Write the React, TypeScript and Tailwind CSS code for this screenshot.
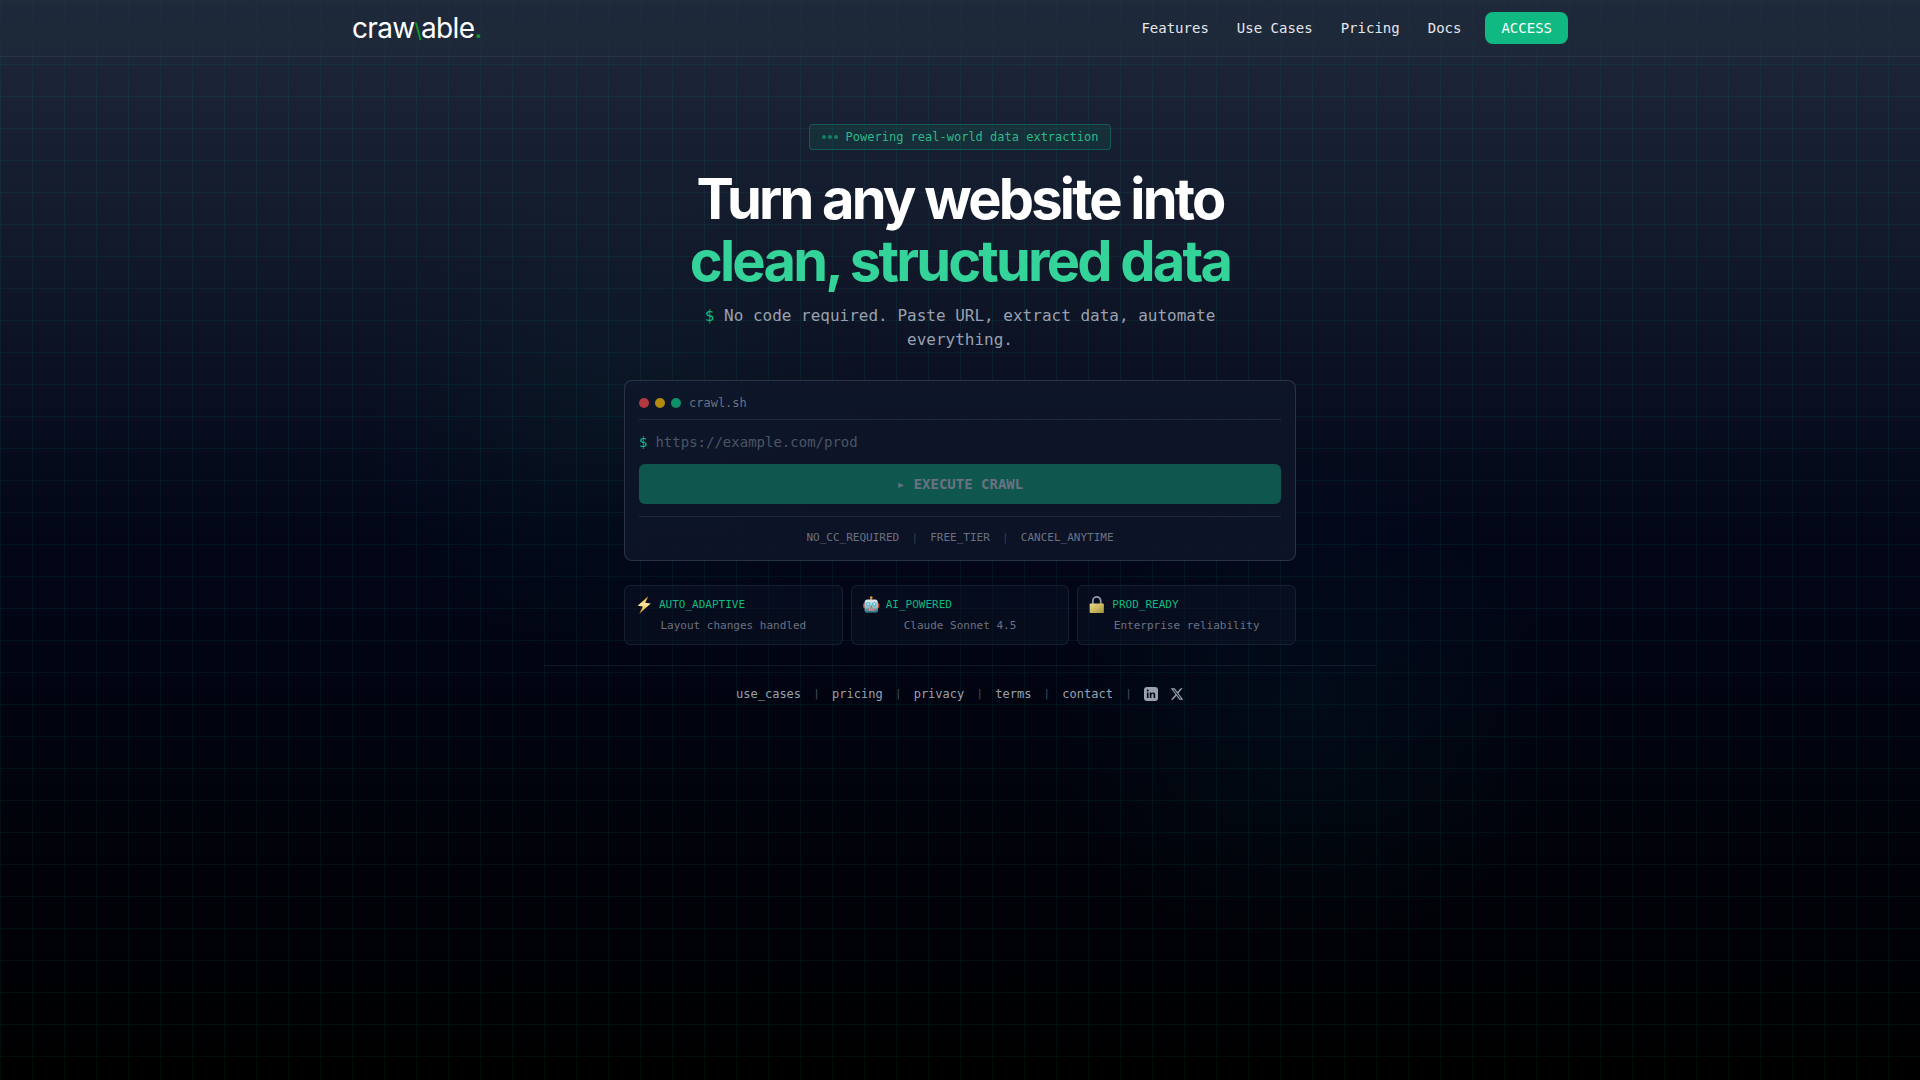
const navLinks = ["Features", "Use Cases", "Pricing", "Docs"];
const perks = ["NO_CC_REQUIRED", "FREE_TIER", "CANCEL_ANYTIME"];
const footerLinks = ["use_cases", "pricing", "privacy", "terms", "contact"];

function Bolt() {
  return (
    <svg viewBox="0 0 16 16" className="size-[18px] shrink-0" aria-hidden="true">
      <defs>
        <linearGradient id="bolt" x1="0" y1="0" x2="0" y2="1">
          <stop offset="0" stopColor="#f59e1b" />
          <stop offset="0.45" stopColor="#ffe9a0" />
          <stop offset="1" stopColor="#f08a12" />
        </linearGradient>
      </defs>
      <path d="M11.8.2 2.300 8.600l4.700.8-3.200 6.400L14 6.600l-4.900-.7z" fill="url(#bolt)" />
    </svg>
  );
}

function Robot() {
  return (
    <svg viewBox="0 0 16 16" className="size-[18px] shrink-0" aria-hidden="true">
      <defs>
        <linearGradient id="robot" x1="0" y1="0" x2="0" y2="1">
          <stop offset="0" stopColor="#e3e8ea" />
          <stop offset="0.55" stopColor="#9cc3ca" />
          <stop offset="1" stopColor="#146f80" />
        </linearGradient>
      </defs>
      <path d="M7.500 1.500h1.400V4H7.500z" fill="#b9822e" />
      <circle cx="8.200" cy="1.400" r="1.200" fill="#e8963a" />
      <rect x="1" y="6.400" width="2" height="4.200" rx="0.900" fill="#c4493f" />
      <rect x="13.400" y="6.400" width="2" height="4.200" rx="0.900" fill="#c4493f" />
      <path d="M5 3h6.400c1.700 0 2.700 1.100 2.700 2.800V12.600c0 1.400-.9 2.300-2.300 2.300H4.600c-1.400 0-2.300-.9-2.300-2.300V5.800C2.300 4.100 3.300 3 5 3z" fill="url(#robot)" />
      <circle cx="5.500" cy="7.400" r="1.900" fill="#35b3cc" />
      <circle cx="10.900" cy="7.400" r="1.900" fill="#35b3cc" />
      <circle cx="5.500" cy="7.400" r="0.900" fill="#e6fbff" />
      <circle cx="10.900" cy="7.400" r="0.900" fill="#e6fbff" />
      <path d="M8.200 8.300l1 1.900h-2z" fill="#c4493f" />
      <rect x="4.700" y="11.300" width="7" height="1.800" rx="0.600" fill="#b9646a" />
      <path d="M6.500 11.300v1.800M8.200 11.300v1.800M9.900 11.300v1.800" stroke="#d9e4e6" strokeWidth="0.500" />
    </svg>
  );
}

function Lock() {
  return (
    <svg viewBox="0 0 16 16" className="size-[18px] shrink-0" aria-hidden="true">
      <defs>
        <linearGradient id="lock" x1="0" y1="0" x2="1" y2="1">
          <stop offset="0" stopColor="#e6d98c" />
          <stop offset="0.5" stopColor="#cdbb62" />
          <stop offset="1" stopColor="#a08f3f" />
        </linearGradient>
      </defs>
      <path d="M4.300 8V4.300a3.500 3.500 0 0 1 7 0V8" fill="none" stroke="#8d99a8" strokeWidth="1.600" />
      <rect x="1.500" y="6.600" width="12.600" height="8.600" rx="0.800" fill="url(#lock)" />
    </svg>
  );
}

const features = [
  { icon: <Bolt />, title: "AUTO_ADAPTIVE", text: "Layout changes handled" },
  { icon: <Robot />, title: "AI_POWERED", text: "Claude Sonnet 4.5" },
  { icon: <Lock />, title: "PROD_READY", text: "Enterprise reliability" },
];

function Backdrop() {
  return (
    <div className="pointer-events-none absolute inset-0 overflow-hidden" aria-hidden="true">
      <div className="absolute inset-0 bg-[radial-gradient(circle_at_32%_38%,rgba(16,185,129,0.04),transparent_260px),radial-gradient(circle_at_68%_66%,rgba(6,182,212,0.04),transparent_260px)]" />
      <div className="absolute inset-0 bg-[linear-gradient(rgba(20,184,166,0.07)_1px,transparent_1px),linear-gradient(90deg,rgba(20,184,166,0.07)_1px,transparent_1px)] bg-[size:32px_32px]" />
    </div>
  );
}

function Header() {
  return (
    <header className="relative border-b border-slate-600/30 bg-[#1e293b]/60">
      <div className="mx-auto flex h-14 max-w-7xl items-center justify-between px-8">
        <a href="#" className="font-[Inter,sans-serif] text-[28px] leading-8 tracking-tight text-white">
          craw<span className="text-xl font-medium text-[#15952b]">\</span>able<span className="text-[#15952b]">.</span>
        </a>
        <div className="flex items-center gap-6">
          <nav className="flex items-center gap-7">
            {navLinks.map((label) => (
              <a key={label} href="#" className="text-sm text-gray-200">
                {label}
              </a>
            ))}
          </nav>
          <button className="h-8 rounded-lg bg-[#10b981] px-4 text-sm text-white">ACCESS</button>
        </div>
      </div>
    </header>
  );
}

function Terminal() {
  return (
    <form className="mt-7 w-full rounded-lg border border-[#334155]/70 bg-[#0f172a]/80 p-3.5 text-left">
      <div className="flex items-center gap-2 border-b border-[#1e293b] pb-2">
        <div className="flex gap-1.5">
          <span className="size-2.5 rounded-full bg-[#b4383f]" />
          <span className="size-2.5 rounded-full bg-[#b48a0e]" />
          <span className="size-2.5 rounded-full bg-[#0f8f69]" />
        </div>
        <span className="text-xs text-gray-500">crawl.sh</span>
      </div>
      <div className="mt-3 flex items-center gap-2 text-sm">
        <label htmlFor="url" className="text-[#10b981]">$</label>
        <input
          id="url"
          type="text"
          placeholder="https://example.com/prod"
          className="h-5 flex-1 bg-transparent text-gray-300 outline-none placeholder:text-gray-600"
        />
      </div>
      <button
        type="button"
        className="mt-3 flex h-10 w-full items-center justify-center rounded-md bg-[#0f574c] text-sm font-bold text-gray-500"
      >
        ▸ EXECUTE CRAWL
      </button>
      <div className="mt-3 flex justify-center gap-3 border-t border-[#1e293b] pt-3 text-[11px] leading-[17px] text-gray-500">
        {perks.map((perk, i) => (
          <span key={perk} className="flex gap-3">
            {i > 0 && <span className="w-[7px] text-center text-[10px] text-gray-700">|</span>}
            {perk}
          </span>
        ))}
      </div>
    </form>
  );
}

export default function App() {
  return (
    <div className="relative min-h-screen bg-[linear-gradient(#1e293b,#020617_50%,#000)] font-['DejaVu_Sans_Mono',monospace]">
      <Backdrop />
      <Header />
      <main className="relative mx-auto flex max-w-2xl flex-col items-center pt-[67px] text-center">
        <div className="flex items-center gap-2 rounded border border-[#10b981]/30 bg-[#10b981]/10 px-3 py-1 text-xs text-[#34d399]/85">
          <span className="flex gap-0.5">
            <span className="size-1 rounded-full bg-[#10b981]/60" />
            <span className="size-1 rounded-full bg-[#10b981]/60" />
            <span className="size-1 rounded-full bg-[#10b981]/60" />
          </span>
          Powering real-world data extraction
        </div>
        <h1 className="mt-[18px] font-[Inter,sans-serif] text-[56px] leading-[62px] font-bold tracking-tighter text-white">
          Turn any website into
          <span className="block text-[#34d399]">clean, structured data</span>
        </h1>
        <p className="mt-3 max-w-xl text-base text-gray-400">
          <span className="text-[#10b981]">$</span> No code required. Paste URL, extract data, automate everything.
        </p>
        <Terminal />
        <div className="mt-6 grid w-full grid-cols-3 gap-2">
          {features.map((f) => (
            <div key={f.title} className="rounded-md border border-[#1e293b]/70 bg-[#0f172a]/40 p-2.5 text-[11px] leading-4">
              <div className="flex items-center gap-1.5">
                {f.icon}
                <span className="text-[#10b981]">{f.title}</span>
              </div>
              <p className="mt-1 text-gray-500">{f.text}</p>
            </div>
          ))}
        </div>
      </main>
      <footer className="relative mx-auto mt-5 flex max-w-[832px] items-center justify-center gap-3 border-t border-[#1e293b]/50 pt-5 text-xs text-gray-400">
        {footerLinks.map((label) => (
          <span key={label} className="flex items-center gap-3">
            <a href="#">{label}</a>
            <span className="w-[7px] text-center text-[10px] text-gray-600">|</span>
          </span>
        ))}
        <a href="#" aria-label="LinkedIn">
          <svg viewBox="0 0 14 14" className="size-3.5">
            <rect width="14" height="14" rx="3" className="fill-gray-400" />
            <circle cx="3.700" cy="3.600" r="1" fill="#02040f" />
            <path d="M2.900 5.500h1.600v5.600H2.900zM5.800 5.500h1.500v.8c.3-.5.900-.9 1.800-.9 1.600 0 2.100 1 2.100 2.500v3.200H9.600V8.200c0-.8-.2-1.400-1-1.400s-1.200.6-1.200 1.400v2.900H5.800z" fill="#02040f" />
          </svg>
        </a>
        <a href="#" aria-label="X">
          <svg viewBox="0 0 24 24" className="size-3.5 fill-current">
            <path d="M18.244 2.250h3.308l-7.227 8.260 8.502 11.240H16.170l-5.214-6.817L4.990 21.750H1.680l7.730-8.835L1.254 2.250H8.080l4.713 6.231zm-1.161 17.520h1.833L7.084 4.126H5.117z" />
          </svg>
        </a>
      </footer>
    </div>
  );
}
